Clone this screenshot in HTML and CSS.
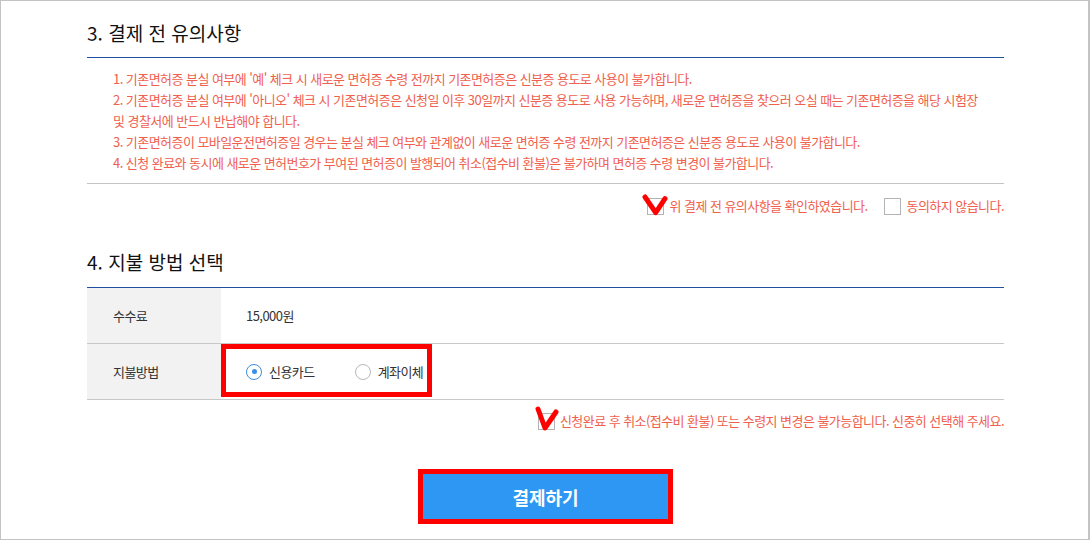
FILE: index.html
```html
<!DOCTYPE html>
<html lang="ko">
<head>
<meta charset="utf-8">
<title>결제</title>
<link rel="stylesheet" href="styles.css">
</head>
<body>
<div class="frame">
  <div class="content">
    <h2 class="sec-title">3. 결제 전 유의사항</h2>
    <ul class="notes">
      <li>1. 기존면허증 분실 여부에 '예' 체크 시 새로운 면허증 수령 전까지 기존면허증은 신분증 용도로 사용이 불가합니다.</li>
      <li>2. 기존면허증 분실 여부에 '아니오' 체크 시 기존면허증은 신청일 이후 30일까지 신분증 용도로 사용 가능하며, 새로운 면허증을 찾으러 오실 때는 기존면허증을 해당 시험장 및 경찰서에 반드시 반납해야 합니다.</li>
      <li>3. 기존면허증이 모바일운전면허증일 경우는 분실 체크 여부와 관계없이 새로운 면허증 수령 전까지 기존면허증은 신분증 용도로 사용이 불가합니다.</li>
      <li>4. 신청 완료와 동시에 새로운 면허번호가 부여된 면허증이 발행되어 취소(접수비 환불)은 불가하며 면허증 수령 변경이 불가합니다.</li>
    </ul>
    <div class="agree">
      <label class="chk">
        <span class="box">
          <svg class="mark mark--agree" width="28" height="24" viewBox="0 0 28 24"><polyline points="3,3 13.7,18.7 23,4.7"/></svg>
        </span>
        <span class="chk-text">위 결제 전 유의사항을 확인하였습니다.</span>
      </label>
      <label class="chk">
        <span class="box"></span>
        <span class="chk-text">동의하지 않습니다.</span>
      </label>
    </div>

    <h2 class="sec-title sec-title--pay">4. 지불 방법 선택</h2>
    <div class="pay-table">
      <div class="pay-row">
        <div class="pay-label">수수료</div>
        <div class="pay-value">15,000원</div>
      </div>
      <div class="pay-row">
        <div class="pay-label">지불방법</div>
        <div class="pay-value pay-value--method">
          <div class="radios">
            <label class="radio"><span class="dot dot--on"></span><span>신용카드</span></label>
            <label class="radio"><span class="dot"></span><span>계좌이체</span></label>
          </div>
        </div>
      </div>
    </div>

    <div class="notice">
      <label class="chk">
        <span class="box">
          <svg class="mark mark--notice" width="28" height="26" viewBox="0 0 28 26"><polyline points="4,3 11,22 22,6"/></svg>
        </span>
        <span class="chk-text">신청완료 후 취소(접수비 환불) 또는 수령지 변경은 불가능합니다. 신중히 선택해 주세요.</span>
      </label>
    </div>

    <div class="btn-wrap">
      <button class="pay-btn" type="button">결제하기</button>
    </div>
  </div>
</div>
</body>
</html>
```

FILE: styles.css
```css
* { box-sizing: border-box; }

html, body {
  margin: 0;
  padding: 0;
  background: #fff;
}

body {
  font-family: "Noto Sans CJK KR", "Noto Sans", sans-serif;
  color: #333;
}

.frame {
  width: 1090px;
  height: 540px;
  border: 1px solid #c3c3c3;
  border-right-width: 2px;
  overflow: hidden;
}

.content {
  margin-left: 86px;
  width: 917px;
}

.sec-title {
  margin: 0;
  padding: 18px 0 10px;
  font-size: 19px;
  line-height: 28px;
  font-weight: normal;
  color: #111;
}

.sec-title--pay {
  padding-top: 33px;
  padding-bottom: 11px;
}

.notes {
  list-style: none;
  margin: 0;
  padding: 10px 18px 10px 26px;
  border-top: 1px solid #1f4f9f;
  border-bottom: 1px solid #c4c4c4;
  font-size: 13px;
  line-height: 21px;
  letter-spacing: -0.55px;
  color: #f0604e;
}

.notes li { margin: 0; }

.agree {
  display: flex;
  justify-content: flex-end;
  gap: 16px;
  margin-top: 13px;
}

.chk {
  display: flex;
  align-items: center;
  gap: 6px;
  font-size: 13px;
  line-height: 18px;
  letter-spacing: -0.55px;
  color: #f0604e;
}

.box {
  position: relative;
  width: 17px;
  height: 17px;
  border: 1px solid #b3b3b3;
  background: #fff;
  flex: none;
}

.mark {
  position: absolute;
  fill: none;
  stroke: #ff0000;
  stroke-width: 5;
  stroke-linecap: round;
  stroke-linejoin: round;
}

.mark--agree { left: -6px; top: -5px; }
.mark--notice { left: -5px; top: -8px; }

.pay-table {
  border-top: 1px solid #1f4f9f;
}

.pay-row {
  display: grid;
  grid-template-columns: 134px 1fr;
  height: 56px;
  border-bottom: 1px solid #c8c8c8;
  font-size: 13px;
  letter-spacing: -0.55px;
  color: #333;
}

.pay-label {
  display: flex;
  align-items: center;
  padding-left: 26px;
  background: #f2f2f2;
}

.pay-value {
  display: flex;
  align-items: center;
  padding-left: 25px;
}

.pay-value--method {
  align-items: flex-start;
  padding-left: 0;
}

.radios {
  display: flex;
  align-items: center;
  width: 211px;
  height: 53px;
  padding: 2px 0 0 20px;
  border: 5px solid #ff0000;
  gap: 40px;
}

.radio {
  display: flex;
  align-items: center;
  gap: 7px;
}

.dot {
  position: relative;
  width: 16px;
  height: 16px;
  border-radius: 50%;
  border: 1px solid #b8b8b8;
  background: #fff;
}

.dot--on { border-color: #3a8ee6; }

.dot--on::after {
  content: "";
  position: absolute;
  left: 4.5px;
  top: 4.5px;
  width: 5px;
  height: 5px;
  border-radius: 50%;
  background: #3a8ee6;
}

.notice {
  display: flex;
  justify-content: flex-end;
  margin-top: 12px;
}

.notice .chk { gap: 5px; }

.btn-wrap {
  display: flex;
  justify-content: center;
  margin-top: 39px;
}

.pay-btn {
  width: 255px;
  height: 55px;
  border: 5px solid #ff0000;
  background: #2e97f4;
  color: #fff;
  font-family: "Noto Sans CJK KR", "Noto Sans", sans-serif;
  font-size: 18px;
  font-weight: bold;
  padding: 0;
  cursor: pointer;
}
```
